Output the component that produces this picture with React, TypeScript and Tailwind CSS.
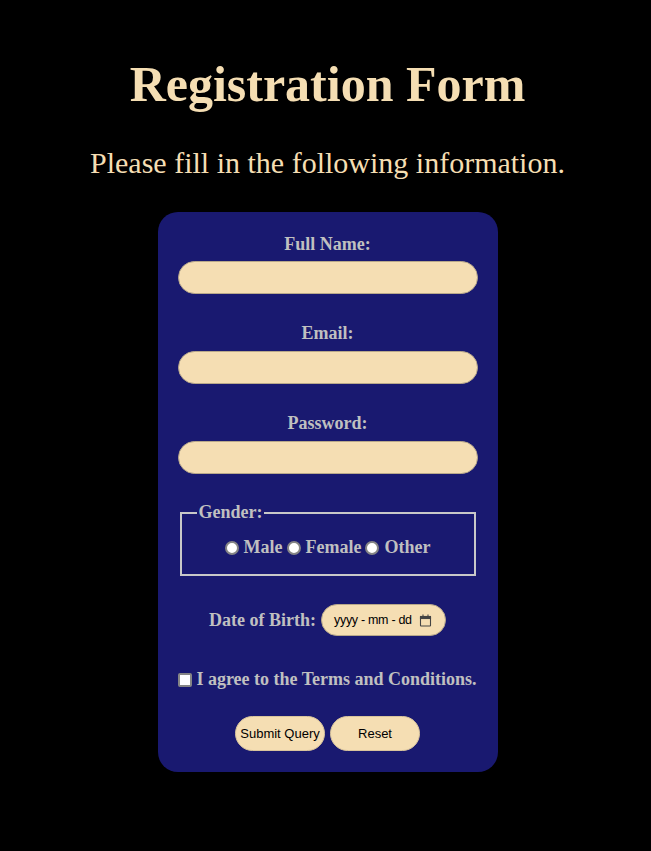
import React from "react";

const serif = { fontFamily: '"Liberation Serif", "Times New Roman", serif' };
const sans = { fontFamily: '"Liberation Sans", Arial, sans-serif' };

function Radio({ label, first }: { label: string; first?: boolean }) {
  return (
    <span className={"inline-flex items-center " + (first ? "" : "ml-[4px]")}>
      <span className="inline-block w-[14px] h-[14px] rounded-full bg-white border-2 border-[#858585] mr-[5px]" />
      <span>{label}</span>
    </span>
  );
}

export default function App() {
  return (
    <div className="min-h-[851px] bg-black flex flex-col items-center pl-[4px]" style={serif}>
      <h1 className="text-[50px] font-bold text-[#f5deb3] leading-[58px] mt-[55px]">Registration Form</h1>
      <p className="text-[30px] text-[#f5deb3] leading-[34px] mt-[33px]">Please fill in the following information.</p>
      <form className="mt-[32px] w-[340px] bg-[#191970] rounded-[20px] pt-[22px] pb-[21px] px-[20px] flex flex-col items-center text-[#c0c0c0] font-bold text-[18px]">
        <label className="leading-[21px]">Full Name:</label>
        <div className="mt-[6px] w-[300px] h-[33px] rounded-full bg-[#f5deb3] border border-[#b8a88a]" />
        <label className="leading-[21px] mt-[29px]">Email:</label>
        <div className="mt-[7px] w-[300px] h-[33px] rounded-full bg-[#f5deb3] border border-[#b8a88a]" />
        <label className="leading-[21px] mt-[29px]">Password:</label>
        <div className="mt-[7px] w-[300px] h-[33px] rounded-full bg-[#f5deb3] border border-[#b8a88a]" />
        <fieldset className="mt-[28px] w-[296px] border-2 border-[#c8c8c8] px-[14px] pb-[16px]">
          <legend className="ml-[1px] px-[2px] leading-[21px]">Gender:</legend>
          <div className="flex justify-center items-center mt-[14px] leading-[21px]">
            <Radio label="Male" first />
            <Radio label="Female" />
            <Radio label="Other" />
          </div>
        </fieldset>
        <div className="mt-[28px] flex items-center">
          <span className="leading-[21px] mr-[4px]">Date of Birth:</span>
          <div className="ml-[1px] w-[125px] h-[32px] rounded-full bg-[#f5deb3] border border-[#b8a88a] flex items-center justify-between pl-[12px] pr-[13px] text-black font-normal text-[12.5px] whitespace-nowrap" style={sans}>
            <span className="tracking-[-0.3px]">yyyy - mm - dd</span>
            <svg width="13" height="13" viewBox="0 0 13 13" fill="none" stroke="#444" strokeWidth="1.1">
              <rect x="1.5" y="2.5" width="10" height="9.5" rx="0.5" />
              <rect x="1.5" y="2.5" width="10" height="2" fill="#444" />
              <line x1="4" y1="0.5" x2="4" y2="2.5" />
              <line x1="9" y1="0.5" x2="9" y2="2.5" />
            </svg>
          </div>
        </div>
        <div className="mt-[33px] flex items-center leading-[21px]">
          <span className="inline-block w-[14px] h-[14px] rounded-[2px] bg-white border-[2px] border-[#858585] mr-[4px]" />
          <span>I agree to the Terms and Conditions.</span>
        </div>
        <div className="mt-[26px] flex gap-[5px]">
          <button type="button" className="w-[90px] h-[35px] rounded-full bg-[#f5deb3] text-black font-normal text-[13px] border border-[#d8c49c]" style={sans}>Submit Query</button>
          <button type="button" className="w-[90px] h-[35px] rounded-full bg-[#f5deb3] text-black font-normal text-[13px] border border-[#d8c49c]" style={sans}>Reset</button>
        </div>
      </form>
    </div>
  );
}
